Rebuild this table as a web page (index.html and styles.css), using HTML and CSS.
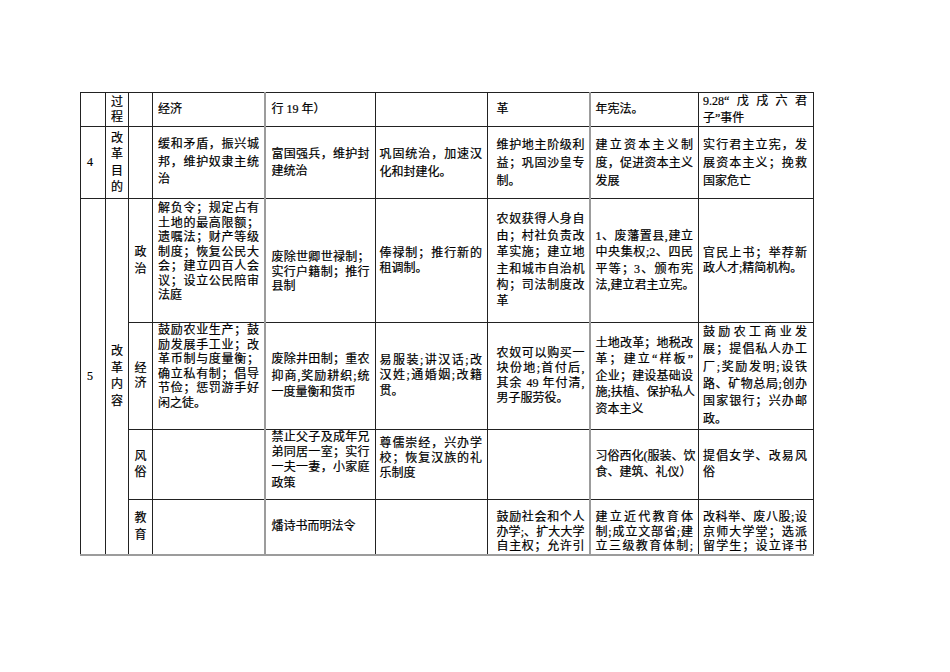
FILE: index.html
```html
<!DOCTYPE html>
<html lang="zh-CN">
<head>
<meta charset="utf-8">
<title>改革对比表</title>
<link rel="stylesheet" href="styles.css">
</head>
<body>
<table class="grid">
<colgroup>
<col class="w1"><col class="w2"><col class="w3"><col class="w4"><col class="w5"><col class="w6"><col class="w7"><col class="w8"><col class="w9">
</colgroup>
<tr class="r1">
<td class="n"></td>
<td class="v"><span>过</span><span>程</span></td>
<td></td>
<td class="t c4"><span>经济</span></td>
<td class="t c5"><span>行 19 年）</span></td>
<td class="t c6"></td>
<td class="t c7"><span>革</span></td>
<td class="t c8"><span>年宪法。</span></td>
<td class="t c9 h16"><span>9.28“戊戌六君</span><span>子”事件</span></td>
</tr>
<tr class="r2">
<td class="n">4</td>
<td class="v h16"><span>改</span><span>革</span><span>目</span><span>的</span></td>
<td></td>
<td class="t c4 h17"><span>缓和矛盾，振兴城</span><span>邦，维护奴隶主统</span><span>治</span></td>
<td class="t c5 h16"><span>富国强兵，维护封</span><span>建统治</span></td>
<td class="t c6 h18"><span>巩固统治，加速汉</span><span>化和封建化。</span></td>
<td class="t c7 h18"><span>维护地主阶级利</span><span>益；巩固沙皇专</span><span>制。</span></td>
<td class="t c8 h18"><span>建立资本主义制</span><span>度，促进资本主义</span><span>发展</span></td>
<td class="t c9 h18"><span>实行君主立宪，发</span><span>展资本主义；挽救</span><span>国家危亡</span></td>
</tr>
<tr class="r3">
<td class="n b" rowspan="4">5</td>
<td class="v h16 b" rowspan="4"><span>改</span><span>革</span><span>内</span><span>容</span></td>
<td class="v h16"><span>政</span><span>治</span></td>
<td class="t c4 h14 top pt2"><span>解负令；规定占有</span><span>土地的最高限额；</span><span>遗嘱法；财产等级</span><span>制度；恢复公民大</span><span>会；建立四百人会</span><span>议；设立公民陪审</span><span>法庭</span></td>
<td class="t c5 h14 top pt51"><span>废除世卿世禄制；</span><span>实行户籍制；推行</span><span>县制</span></td>
<td class="t c6 h14"><span>俸禄制；推行新的</span><span>租调制。</span></td>
<td class="t c7 h16"><span>农奴获得人身自</span><span>由；村社负责改</span><span>革实施；建立地</span><span>主和城市自治机</span><span>构；司法制度改</span><span>革</span></td>
<td class="t c8 h16"><span>1、废藩置县,建立</span><span>中央集权;2、四民</span><span>平等；3、颁布宪</span><span>法,建立君主立宪。</span></td>
<td class="t c9 h14"><span>官民上书；举荐新</span><span>政人才;精简机构。</span></td>
</tr>
<tr class="r4">
<td class="v h15"><span>经</span><span>济</span></td>
<td class="t c4 h14 top"><span>鼓励农业生产；鼓</span><span>励发展手工业；改</span><span>革币制与度量衡；</span><span>确立私有制；倡导</span><span>节俭；惩罚游手好</span><span>闲之徒。</span></td>
<td class="t c5 h16"><span>废除井田制；重农</span><span>抑商,奖励耕织;统</span><span>一度量衡和货币</span></td>
<td class="t c6 h15"><span>易服装;讲汉话;改</span><span>汉姓;通婚姻;改籍</span><span>贯。</span></td>
<td class="t c7 h15"><span>农奴可以购买一</span><span>块份地;首付后,</span><span>其余 49 年付清,</span><span>男子服劳役。</span></td>
<td class="t c8 h16"><span>土地改革；地税改</span><span>革；建立“样板”</span><span>企业；建设基础设</span><span>施;扶植、保护私人</span><span>资本主义</span></td>
<td class="t c9 h17"><span>鼓励农工商业发</span><span>展；提倡私人办工</span><span>厂;奖励发明;设铁</span><span>路、矿物总局;创办</span><span>国家银行；兴办邮</span><span>政。</span></td>
</tr>
<tr class="r5">
<td class="v h15"><span>风</span><span>俗</span></td>
<td class="t c4"></td>
<td class="t c5 h15 top"><span>禁止父子及成年兄</span><span>弟同居一室；实行</span><span>一夫一妻，小家庭</span><span>政策</span></td>
<td class="t c6 h15 top pt6"><span>尊儒崇经，兴办学</span><span>校；恢复汉族的礼</span><span>乐制度</span></td>
<td class="t c7"></td>
<td class="t c8 h15"><span>习俗西化(服装、饮</span><span>食、建筑、礼仪）</span></td>
<td class="t c9 h15"><span>提倡女学、改易风</span><span>俗</span></td>
</tr>
<tr class="r6">
<td class="v h16 b"><span>教</span><span>育</span></td>
<td class="t c4 b"></td>
<td class="t c5 b"><span>燔诗书而明法令</span></td>
<td class="t c6 b"></td>
<td class="t c7 h14 top pt10 full b"><span>鼓励社会和个人</span><span>办学;、扩大大学</span><span>自主权；允许引</span></td>
<td class="t c8 h14 top pt10 full b"><span>建立近代教育体</span><span>制;成立文部省;建</span><span>立三级教育体制;</span></td>
<td class="t c9 h14 top pt10 full b"><span>改科举、废八股;设</span><span>京师大学堂；选派</span><span>留学生；设立译书</span></td>
</tr>
</table>
</body>
</html>
```
FILE: styles.css
```css
html, body {
  margin: 0;
  background: #ffffff;
}

.grid {
  border-collapse: collapse;
  table-layout: fixed;
  width: 734px;
  margin: 92px 0 0 80px;
  font-family: "Liberation Serif", "Noto Sans CJK SC", serif;
  font-size: 12px;
  line-height: 15px;
  color: #000000;
  -webkit-text-stroke: 0.2px #000000;
}

.w1 { width: 25px; }
.w2 { width: 23px; }
.w3 { width: 24px; }
.w4 { width: 112px; }
.w5 { width: 111px; }
.w6 { width: 112px; }
.w7 { width: 102px; }
.w8 { width: 109px; }
.w9 { width: 115px; }

.r1 { height: 34px; }
.r2 { height: 72px; }
.r3 { height: 124px; }
.r4 { height: 107px; }
.r5 { height: 70px; }
.r6 { height: 55px; }

.grid td {
  border: 1px solid #222222;
  padding: 0;
  vertical-align: middle;
}

.grid td.c5,
.grid td.c8 {
  border-left: 2px solid #9c9c9c;
}

.grid td.b {
  border-bottom: 2px solid #9c9c9c;
}

.n {
  padding-left: 6px !important;
  text-align: left;
}

.v span,
.t span {
  display: block;
  white-space: nowrap;
}

.v span {
  text-align: center;
}

.t span {
  text-align: justify;
  text-align-last: justify;
}

.t span:last-child {
  text-align-last: left;
}

.t.full span:last-child {
  text-align-last: justify;
}

.grid td.c4 { padding: 0 4.5px 0 5px; }
.grid td.c5 { padding: 0 5.5px 0 6px; }
.grid td.c6 { padding: 0 5px 0 3.5px; }
.grid td.c7 { padding: 0 4px 0 8.5px; }
.grid td.c8 { padding: 0 5px 0 5px; }
.grid td.c9 { padding: 0 6px 0 4px; }

.h14 { line-height: 14.5px; }
.h15 { line-height: 15.2px; }
.h16 { line-height: 16.4px; }
.h17 { line-height: 17.4px; }
.h18 { line-height: 18px; }

.grid td.top { vertical-align: top; }
.grid td.pt2 { padding-top: 2px; }
.grid td.pt6 { padding-top: 6px; }
.grid td.pt10 { padding-top: 10px; }
.grid td.pt51 { padding-top: 51px; }
```
